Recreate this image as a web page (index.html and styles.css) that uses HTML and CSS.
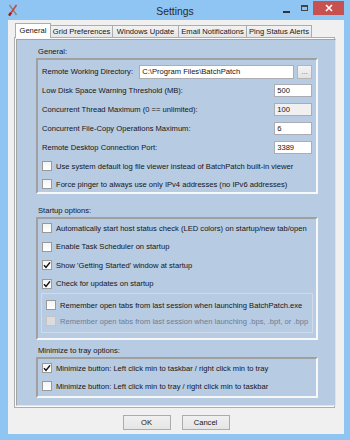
FILE: index.html
```html
<!DOCTYPE html>
<html lang="en">
<head>
    <meta charset="UTF-8">
    <title>Settings</title>
    <link rel="stylesheet" href="styles.css">
</head>
<body>
    <div class="window">
        <div class="titlebar">
            <div class="app-icon">
                <svg width="10" height="12" viewBox="0 0 10 12">
                    <line x1="1.5" y1="1" x2="8.5" y2="11" stroke="#8a8a8a" stroke-width="1.6"/>
                    <line x1="8.5" y1="1" x2="1.5" y2="11" stroke="#d4403a" stroke-width="1.6"/>
                    <line x1="3" y1="8.8" x2="1" y2="11.6" stroke="#9c1f1a" stroke-width="2.4"/>
                </svg>
            </div>
            <div class="title">Settings</div>
            <div class="controls">
                <span class="ctl-min"></span>
                <span class="ctl-max"></span>
                <span class="ctl-close">
                    <svg width="8" height="8" viewBox="0 0 8 8">
                        <path d="M1 1 L7 7 M7 1 L1 7" stroke="#fff" stroke-width="1.6"/>
                    </svg>
                </span>
            </div>
        </div>

        <div class="client">
            <nav class="tabs">
                <button class="tab active">General</button>
                <button class="tab">Grid Preferences</button>
                <button class="tab">Windows Update</button>
                <button class="tab">Email Notifications</button>
                <button class="tab">Ping Status Alerts</button>
            </nav>

            <div class="tabpage">
                <div class="panel">
                    <div class="group-title">General:</div>
                    <div class="group group-general">
                        <div class="field">
                            <label>Remote Working Directory:</label>
                            <div class="path">
                                <input type="text" class="txt txt-wide" value="C:\Program Files\BatchPatch">
                                <button class="browse">...</button>
                            </div>
                        </div>
                        <div class="field">
                            <label>Low Disk Space Warning Threshold (MB):</label>
                            <input type="text" class="txt txt-num" value="500">
                        </div>
                        <div class="field">
                            <label>Concurrent Thread Maximum (0 == unlimited):</label>
                            <input type="text" class="txt txt-num readonly" value="100" readonly>
                        </div>
                        <div class="field">
                            <label>Concurrent File-Copy Operations Maximum:</label>
                            <input type="text" class="txt txt-num" value="6">
                        </div>
                        <div class="field">
                            <label>Remote Desktop Connection Port:</label>
                            <input type="text" class="txt txt-num" value="3389">
                        </div>
                        <div class="check">
                            <span class="box"></span>
                            <span>Use system default log file viewer instead of BatchPatch built-in viewer</span>
                        </div>
                        <div class="check">
                            <span class="box"></span>
                            <span>Force pinger to always use only IPv4 addresses (no IPv6 addresses)</span>
                        </div>
                    </div>

                    <div class="group-title gap-large">Startup options:</div>
                    <div class="group group-startup">
                        <div class="check">
                            <span class="box"></span>
                            <span>Automatically start host status check (LED colors) on startup/new tab/open</span>
                        </div>
                        <div class="check">
                            <span class="box"></span>
                            <span>Enable Task Scheduler on startup</span>
                        </div>
                        <div class="check">
                            <span class="box checked"><svg width="8" height="8" viewBox="0 0 8 8"><path d="M1 4.2 L3 6.4 L7 1.4" fill="none" stroke="#111" stroke-width="1.5"/></svg></span>
                            <span>Show 'Getting Started' window at startup</span>
                        </div>
                        <div class="check">
                            <span class="box checked"><svg width="8" height="8" viewBox="0 0 8 8"><path d="M1 4.2 L3 6.4 L7 1.4" fill="none" stroke="#111" stroke-width="1.5"/></svg></span>
                            <span>Check for updates on startup</span>
                        </div>
                        <div class="subgroup">
                            <div class="check">
                                <span class="box"></span>
                                <span>Remember open tabs from last session when launching BatchPatch.exe</span>
                            </div>
                            <div class="check disabled">
                                <span class="box"></span>
                                <span>Remember open tabs from last session when launching .bps, .bpt, or .bpp</span>
                            </div>
                        </div>
                    </div>

                    <div class="group-title gap-small">Minimize to tray options:</div>
                    <div class="group group-tray">
                        <div class="check">
                            <span class="box checked"><svg width="8" height="8" viewBox="0 0 8 8"><path d="M1 4.2 L3 6.4 L7 1.4" fill="none" stroke="#111" stroke-width="1.5"/></svg></span>
                            <span>Minimize button: Left click min to taskbar / right click min to tray</span>
                        </div>
                        <div class="check">
                            <span class="box"></span>
                            <span>Minimize button: Left click min to tray / right click min to taskbar</span>
                        </div>
                    </div>
                </div>
            </div>

            <div class="buttons">
                <button class="btn">OK</button>
                <button class="btn">Cancel</button>
            </div>
        </div>
    </div>
</body>
</html>
```

FILE: styles.css
```css
* {
    box-sizing: border-box;
}
body {
    margin: 0;
    width: 350px;
    height: 440px;
    overflow: hidden;
    background-color: #8ec5f2;
    font-family: "Liberation Sans", Arial, sans-serif;
    font-size: 7.6px;
    color: #151515;
}
button, input {
    font-family: inherit;
    font-size: inherit;
    color: inherit;
}
.window {
    height: 440px;
    display: flex;
    flex-direction: column;
}

/* barra de titulo */
.titlebar {
    height: 20px;
    display: grid;
    grid-template-columns: 1fr auto 1fr;
    align-items: center;
}
.app-icon {
    padding-left: 8px;
    display: flex;
    align-items: center;
    margin-top: -1px;
}
.title {
    font-size: 10.4px;
    color: #2a2a2a;
    margin-top: 2px;
}
.controls {
    display: flex;
    justify-content: flex-end;
    align-items: flex-start;
    height: 20px;
    padding-right: 6px;
}
.ctl-min {
    width: 7px;
    height: 2px;
    background-color: #333;
    margin-top: 11px;
    margin-right: 11px;
}
.ctl-max {
    width: 7px;
    height: 6px;
    border: 1px solid #444;
    border-top-width: 2px;
    margin-top: 5px;
    margin-right: 5px;
}
.ctl-close {
    width: 31px;
    height: 14px;
    margin-top: 1px;
    background-color: #c75050;
    display: flex;
    align-items: center;
    justify-content: center;
}

/* area cliente */
.client {
    flex: 1;
    margin: 0 6px 6px 8px;
    background-color: #f0f0f0;
    padding-top: 3px;
    display: flex;
    flex-direction: column;
}
.tabs {
    display: flex;
    align-items: flex-end;
    height: 14px;
    padding-left: 7px;
}
.tab {
    height: 12px;
    padding: 0;
    border: 1px solid #acacac;
    border-bottom: none;
    border-left: none;
    background: linear-gradient(#f2f2f2, #e6e6e6);
    cursor: pointer;
    line-height: 10px;
    white-space: nowrap;
}
.tab:nth-child(1) { width: 36px; }
.tab:nth-child(2) { width: 62px; }
.tab:nth-child(3) { width: 66px; }
.tab:nth-child(4) { width: 68px; }
.tab:nth-child(5) { width: 65px; }
.tab.active {
    height: 15px;
    margin-bottom: -1px;
    background: #fff;
    border-left: 1px solid #acacac;
    position: relative;
    z-index: 1;
    line-height: 12px;
}
.tabpage {
    margin: 0 9px 0 6px;
    height: 371px;
    border: 1px solid #adadad;
    background-color: #fbfbfb;
    padding: 1px;
    display: flex;
}
.panel {
    flex: 1;
    background-color: #b7cbe3;
    border: 1px solid;
    border-color: #a3a3a3 #e2e2e2 #e2e2e2 #a3a3a3;
    padding: 6px 17px 0 19px;
}

/* grupos */
.group-title {
    height: 12px;
    line-height: 12px;
    padding-left: 2px;
}
.gap-large {
    margin-top: 11px;
}
.gap-small {
    margin-top: 5px;
}
.group {
    border: 2px solid;
    border-color: #a0a0a0 #f8f8f8 #f8f8f8 #a0a0a0;
    padding: 0 4px;
}
.group-general {
    padding-top: 2px;
    height: 136px;
}
.group-startup {
    height: 123px;
}
.group-tray {
    height: 41px;
}
.field {
    display: flex;
    align-items: center;
    justify-content: space-between;
    height: 19px;
    white-space: nowrap;
}
.path {
    display: flex;
    gap: 3px;
}
.txt {
    height: 14px;
    border: 1px solid #abadb3;
    background-color: #fff;
    padding: 0 2px;
    outline: none;
}
.txt-wide {
    width: 155px;
}
.txt-num {
    width: 38px;
    height: 13px;
}
.txt.readonly {
    background-color: #f0f0f0;
}
.browse {
    width: 15px;
    height: 14px;
    padding: 0;
    border: 1px solid #b5b5b5;
    background: linear-gradient(#f4f4f4, #e2e2e2);
    color: #666;
    line-height: 8px;
}

/* casillas */
.check {
    display: flex;
    align-items: center;
    gap: 4px;
    height: 18px;
    white-space: nowrap;
}
.group-startup .check {
    height: 18.5px;
}
.box {
    width: 10px;
    height: 10px;
    flex-shrink: 0;
    border: 1px solid #999;
    background: linear-gradient(#f4f4f4, #fff);
    display: flex;
    align-items: center;
    justify-content: center;
}
.subgroup {
    border: 1px solid #cfdaea;
    margin: 0 -1px 0 -1px;
    padding: 3px 4px 0 4px;
    height: 40px;
}
.subgroup .check {
    height: 16px;
}
.check.disabled {
    color: #6e7d93;
}
.check.disabled .box {
    background: #dcdcdc;
    border-color: #c4c4c4;
}

/* botones */
.buttons {
    display: flex;
    justify-content: center;
    gap: 11px;
    margin-top: 7px;
}
.btn {
    width: 48px;
    height: 15px;
    padding: 0;
    border: 1px solid #acacac;
    background: linear-gradient(#f0f0f0, #e5e5e5);
    cursor: pointer;
}
```
